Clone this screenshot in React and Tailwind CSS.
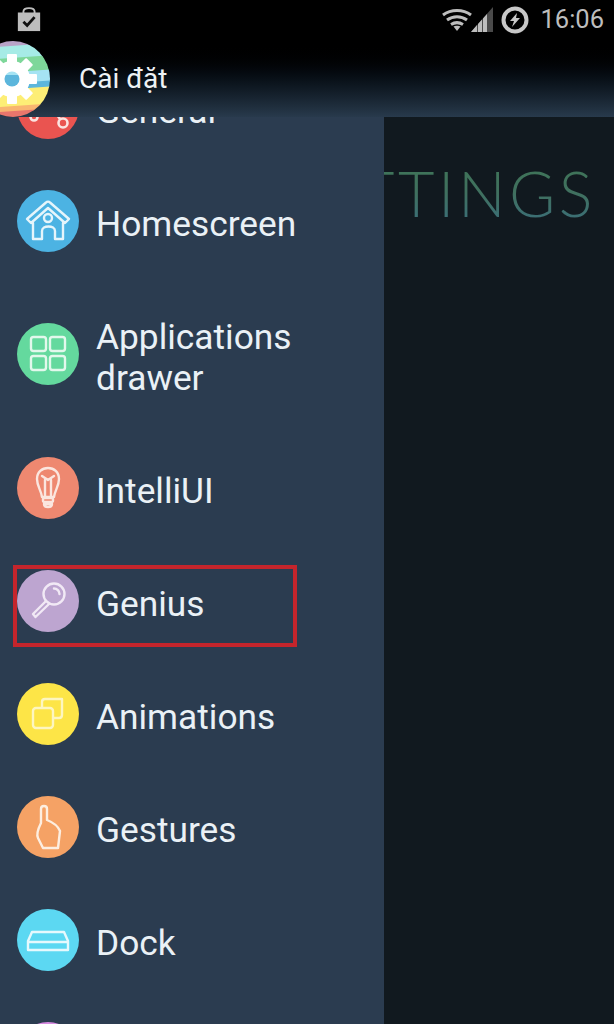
import React from 'react';

const font = { roboto: 'font-["Roboto",sans-serif]' };

function HomeIcon() {
  return (
    <svg viewBox="0 0 62 62" className="w-[62px] h-[62px]" fill="none" stroke="#e6f5fb" strokeWidth="2.4" strokeLinejoin="round" strokeLinecap="round">
      <path d="M10 29 L29 12.5 C30 11.5 32 11.5 33 12.5 L52 29 L48 33 L31 18 L14 33 Z" />
      <path d="M16 33 V49 H25 V41 C25 35 38 35 38 41 V49 H46 V33" />
      <circle cx="31" cy="28" r="4" />
    </svg>
  );
}

function GridIcon() {
  return (
    <svg viewBox="0 0 62 62" className="w-[62px] h-[62px]" fill="none" stroke="#e2f8ec" strokeWidth="2.4">
      <rect x="14" y="14" width="15" height="14" rx="2.5" />
      <rect x="33" y="14" width="15" height="14" rx="2.5" />
      <rect x="14" y="33" width="15" height="14" rx="2.5" />
      <rect x="33" y="33" width="15" height="14" rx="2.5" />
    </svg>
  );
}

function BulbIcon() {
  return (
    <svg viewBox="0 0 62 62" className="w-[62px] h-[62px]" fill="none" stroke="#fbe6df" strokeWidth="2.4" strokeLinejoin="round" strokeLinecap="round">
      <path d="M25 40 C24 33 20 29 20 22 C20 15 25 11 31 11 C37 11 42 15 42 22 C42 29 38 33 37 40 Z" />
      <path d="M25 19 L31 23 L37 19" />
      <path d="M28 23 V39 M34 23 V39" />
      <rect x="26" y="41" width="10" height="4" rx="1.5" />
      <path d="M27 47 H35 C35 51 27 51 27 47 Z" />
    </svg>
  );
}

function SearchIcon() {
  return (
    <svg viewBox="0 0 62 62" className="w-[62px] h-[62px]" fill="none" stroke="#f1e9f5" strokeWidth="2.4" strokeLinecap="round" strokeLinejoin="round">
      <circle cx="37" cy="24" r="10.5" />
      <path d="M37 18.5 C40 18.5 42.5 21 42.5 24" />
      <path d="M29 31 L16 44 L18.5 47 L32 34" />
    </svg>
  );
}

function LayersIcon() {
  return (
    <svg viewBox="0 0 62 62" className="w-[62px] h-[62px]" fill="none" stroke="#fdf6c0" strokeWidth="2.4" strokeLinejoin="round">
      <rect x="16" y="25" width="20" height="20" rx="3" />
      <path d="M25 25 V19 C25 17 26 16 28 16 H45 V32 C45 34 44 35 42 35 H36" />
    </svg>
  );
}

function HandIcon() {
  return (
    <svg viewBox="0 0 62 62" className="w-[62px] h-[62px]" fill="none" stroke="#fdeee0" strokeWidth="2.4" strokeLinejoin="round" strokeLinecap="round">
      <path d="M24 27 V13 C24 9 30 9 30 13 V24 C35 26 41 30 43 35 L41 52 H26 L21 42 C19 38 21 33 24 27 Z" />
    </svg>
  );
}

function DockIcon() {
  return (
    <svg viewBox="0 0 62 62" className="w-[62px] h-[62px]" fill="none" stroke="#e6f9fd" strokeWidth="2.4" strokeLinejoin="round">
      <path d="M15 23 H47 L51 32 V41 H11 V32 Z" />
      <path d="M11 33 H51" />
    </svg>
  );
}

function RouteIcon() {
  return (
    <svg viewBox="0 0 62 62" className="w-[62px] h-[62px]" fill="none" stroke="#fbe3e0" strokeWidth="2.6">
      <circle cx="17" cy="40" r="3.5" />
      <circle cx="46" cy="46" r="4.5" />
      <path d="M20 38 L38 30 M43 42 L36 32" />
    </svg>
  );
}

const items = [
  { label: 'General', color: 'bg-[#ea5450]', icon: <RouteIcon />, h: 'h-[113px]' },
  { label: 'Homescreen', color: 'bg-[#4cb3e3]', icon: <HomeIcon />, h: 'h-[113px]' },
  { label: 'Applications drawer', color: 'bg-[#64d99e]', icon: <GridIcon />, h: 'h-[154px]' },
  { label: 'IntelliUI', color: 'bg-[#ee8870]', icon: <BulbIcon />, h: 'h-[113px]' },
  { label: 'Genius', color: 'bg-[#bda5d0]', icon: <SearchIcon />, h: 'h-[113px]', boxed: true },
  { label: 'Animations', color: 'bg-[#fde547]', icon: <LayersIcon />, h: 'h-[113px]' },
  { label: 'Gestures', color: 'bg-[#f5a265]', icon: <HandIcon />, h: 'h-[113px]' },
  { label: 'Dock', color: 'bg-[#5cd8f2]', icon: <DockIcon />, h: 'h-[113px]' },
  { label: '', color: 'bg-[#d78be0]', icon: null, h: 'h-[113px]' },
];

function MenuRow({ item }) {
  return (
    <div className={`relative flex items-center shrink-0 gap-[17px] pl-[17px] ${item.h}`}>
      <div className={`flex items-center justify-center shrink-0 w-[62px] h-[62px] rounded-full ${item.color}`}>
        {item.icon}
      </div>
      <div className="w-[270px] pt-[8px] text-[35.3px] leading-[41px] text-[#eaf1f6]">{item.label}</div>
      {item.boxed && (
        <div className="absolute left-[13px] top-[21px] w-[284px] h-[82px] border-[4px] border-[#c5252c]" />
      )}
    </div>
  );
}

const gearTeeth = [0, 45, 90, 135, 180, 225, 270, 315];

function AppLogo() {
  return (
    <svg viewBox="0 0 74 76" className="absolute left-[-24px] top-[41px] w-[74px] h-[76px]">
      <defs>
        <clipPath id="logoClip">
          <ellipse cx="37" cy="38" rx="37" ry="38" />
        </clipPath>
        <clipPath id="holeClip">
          <circle cx="36" cy="38" r="7.5" />
        </clipPath>
      </defs>
      <g clipPath="url(#logoClip)">
        <g transform="rotate(-4 37 38)">
          <rect x="-5" y="-5" width="84" height="11" fill="#b9a3c8" />
          <rect x="-5" y="5" width="84" height="13" fill="#a6ebe6" />
          <rect x="-5" y="17" width="84" height="15" fill="#7ed79a" />
          <rect x="-5" y="31" width="84" height="12" fill="#a5e3f3" />
          <rect x="-5" y="42" width="84" height="7" fill="#5cb6dc" />
          <rect x="-5" y="48" width="84" height="18" fill="#fdee76" />
          <rect x="-5" y="65" width="84" height="6" fill="#f8b571" />
          <rect x="-5" y="70" width="84" height="12" fill="#e9766c" />
        </g>
      </g>
      <g fill="#fff">
        <circle cx="36" cy="38" r="18" />
        {gearTeeth.map((deg) => (
          <rect key={deg} x="31" y="13" width="10" height="12" rx="1" transform={`rotate(${deg} 36 38)`} />
        ))}
      </g>
      <g clipPath="url(#holeClip)">
        <rect x="26" y="28" width="20" height="6" fill="#a5e3f3" />
        <rect x="26" y="34" width="20" height="14" fill="#5cb6dc" />
      </g>
    </svg>
  );
}

function StatusIcons() {
  return (
    <div className="flex items-center h-[39px] pr-[10px]">
      <svg viewBox="0 0 30 22" className="w-[30px] h-[22px]" fill="none" stroke="#bdbdbd" strokeWidth="3">
        <path d="M1 6 C9 0 21 0 29 6" />
        <path d="M5 11 C11 6.5 19 6.5 25 11" />
        <path d="M9 15.5 C13 13 17 13 21 15.5" />
        <path d="M11.5 17.5 L15 22 L18.5 17.5 C17 16.5 13 16.5 11.5 17.5 Z" fill="#bdbdbd" stroke="none" />
      </svg>
      <svg viewBox="0 0 22 25" className="w-[22px] h-[25px] ml-[-1px]">
        <path d="M0 25 L22 0 V25 Z" fill="#4a4a4a" />
        <path d="M0 25 L6 18 V25 Z M7 25 V17 L11 12.5 V25 Z M12 25 V11.5 L16 7 V25 Z" fill="#bdbdbd" />
      </svg>
      <svg viewBox="0 0 28 28" className="w-[28px] h-[28px] ml-[8px]" fill="none">
        <circle cx="14" cy="14" r="11.5" stroke="#c8c8c8" strokeWidth="4" />
        <path d="M16 7 L9 15 H13 L11 21 L19 12 H15 Z" fill="#c8c8c8" />
      </svg>
      <span className={`${font.roboto} text-[25.5px] leading-none text-[#bdbdbd] ml-[11px]`}>16:06</span>
    </div>
  );
}

export default function App() {
  return (
    <div className={`${font.roboto} relative flex w-[614px] h-[1024px] overflow-hidden bg-[#11191f]`}>
      {/* drawer */}
      <div className="flex flex-col w-[384px] h-full shrink-0 overflow-hidden pt-[51px] bg-[#2b3c50]">
        {items.map((item) => (
          <MenuRow key={item.label} item={item} />
        ))}
      </div>

      {/* settings page behind the drawer */}
      <div className="relative flex-1 overflow-hidden">
        <div className='absolute right-[18px] top-[158px] font-["Lato",sans-serif] font-light text-[63px] leading-[70px] tracking-[3.5px] whitespace-nowrap text-transparent bg-clip-text bg-gradient-to-b from-[#3e7555] via-[#40705f] to-[#3a6e7c]'>
          SETTINGS
        </div>
      </div>

      {/* action bar */}
      <div className="absolute left-0 top-0 w-full h-[117px] bg-gradient-to-b from-black from-[35%] to-[#283a4c]">
        <div className="flex items-start justify-between">
          <svg viewBox="0 0 26 28" className="ml-[16px] mt-[6px] w-[26px] h-[26px]">
            <path d="M7 9 V6 C7 1 19 1 19 6 V9" fill="none" stroke="#bdbdbd" strokeWidth="2" />
            <rect x="1" y="7" width="24" height="20" fill="#bdbdbd" />
            <path d="M7 17 L11 21 L19 12" fill="none" stroke="#111" strokeWidth="3" />
          </svg>
          <StatusIcons />
        </div>
        <div className="absolute left-[79px] top-[62px] text-[28px] leading-[34px] text-[#eef2f5]">Cài đặt</div>
        <AppLogo />
      </div>
    </div>
  );
}
